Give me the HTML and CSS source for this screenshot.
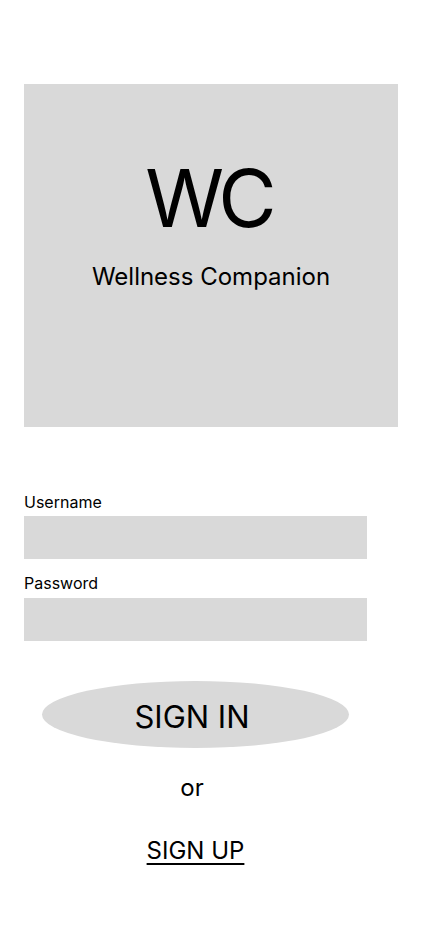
FILE: index.html
```html
<!DOCTYPE html>
<html lang="en">
<head>
<meta charset="utf-8">
<meta name="viewport" content="width=device-width, initial-scale=1">
<title>Wellness Companion</title>
<link rel="stylesheet" href="styles.css">
</head>
<body>
  <main class="screen">
    <section class="logo">
      <div class="logo-mark">WC</div>
      <div class="logo-name">Wellness Companion</div>
    </section>
    <form class="login">
      <label class="field-label" for="username">Username</label>
      <input class="field-input" id="username" type="text">
      <label class="field-label field-label-second" for="password">Password</label>
      <input class="field-input field-input-second" id="password" type="password">
      <div class="actions">
        <button class="signin" type="button"><span>SIGN IN</span></button>
        <div class="or">or</div>
        <a class="signup" href="#">SIGN UP</a>
      </div>
    </form>
  </main>
</body>
</html>
```

FILE: styles.css
```css
* { box-sizing: border-box; }
html, body { margin: 0; padding: 0; background: #ffffff; }
body {
  font-family: Inter, "Noto Sans", "Liberation Sans", sans-serif;
  color: #000000;
}
.screen {
  width: 430px;
  min-height: 932px;
  padding: 84px 0 0 24px;
}
.logo {
  width: 374px;
  height: 343px;
  background: #d9d9d9;
  display: flex;
  flex-direction: column;
  align-items: center;
  padding-top: 74px;
}
.logo-mark {
  font-size: 80px;
  line-height: 1;
  font-weight: 400;
  letter-spacing: -6px;
  padding-right: 6px;
}
.logo-name {
  font-size: 24px;
  line-height: 1;
  margin-top: 26.5px;
}
.login {
  display: flex;
  flex-direction: column;
  margin-top: 67px;
}
.field-label {
  font-size: 16px;
  line-height: 1;
  margin-bottom: 6px;
}
.field-label-second {
  margin-top: 15.5px;
  margin-bottom: 7.5px;
}
.field-input {
  width: 343px;
  height: 43px;
  border: 0;
  margin: 0;
  padding: 0 10px;
  background: #d9d9d9;
  font: inherit;
  outline: none;
}
.actions {
  display: flex;
  flex-direction: column;
  align-items: center;
  width: 307px;
  margin-left: 18px;
  margin-top: 40px;
}
.signin {
  width: 307px;
  height: 67px;
  border: 0;
  border-radius: 50%;
  background: #d9d9d9;
  font-family: inherit;
  font-size: 31px;
  line-height: 1;
  color: #000;
  padding: 4px 7px 0 0;
  display: flex;
  align-items: center;
  justify-content: center;
}
.or {
  font-size: 24px;
  line-height: 1;
  margin-top: 28px;
  padding-right: 7px;
}
.signup {
  font-size: 24px;
  line-height: 1;
  margin-top: 38.5px;
  color: #000;
  text-decoration: underline;
  text-underline-offset: 4px;
  text-decoration-thickness: 1.5px;
}
```
